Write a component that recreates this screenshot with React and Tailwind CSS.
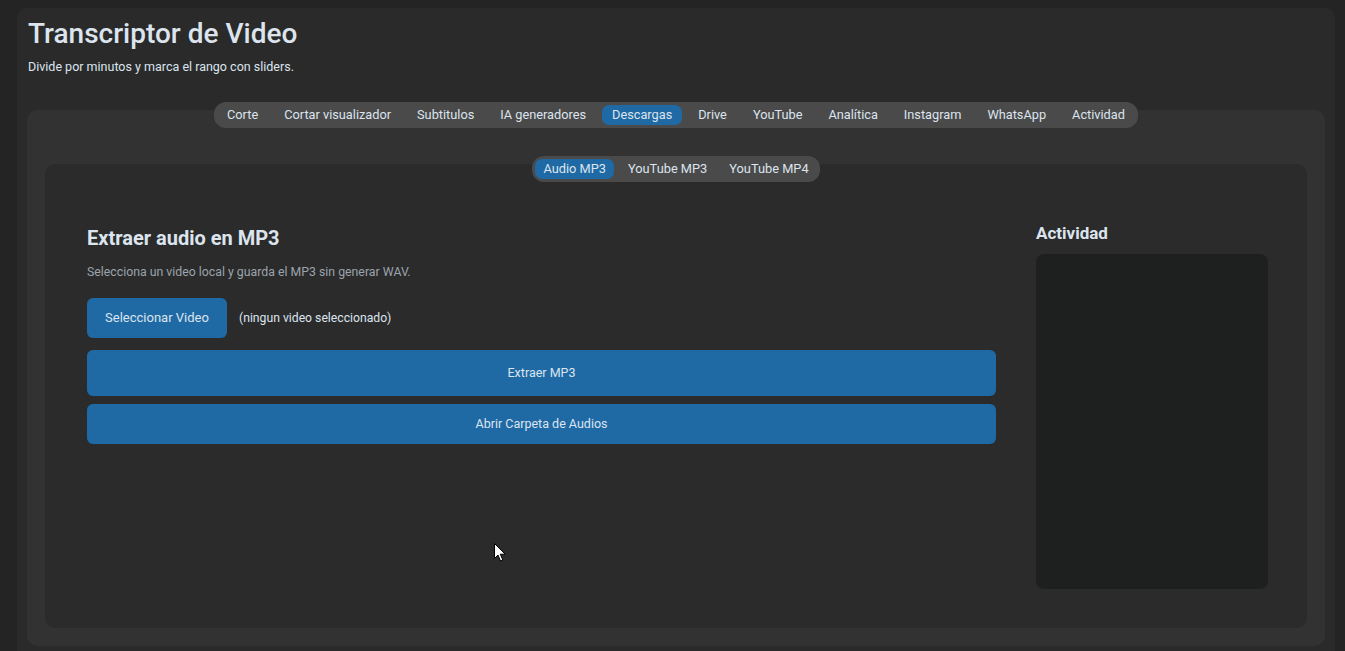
import React, { useState } from 'react';

const mainTabs = [
    'Corte',
    'Cortar visualizador',
    'Subtitulos',
    'IA generadores',
    'Descargas',
    'Drive',
    'YouTube',
    'Analítica',
    'Instagram',
    'WhatsApp',
    'Actividad',
];

const downloadTabs = ['Audio MP3', 'YouTube MP3', 'YouTube MP4'];

// Segmented tab strip, sits half over the panel below it
const TabStrip = ({ tabs, active, onSelect, pad = 'px-[10px]', size = 'text-[13px]' }) => (
    <div className="relative z-10 flex items-center gap-[6px] rounded-[12px] bg-[#4a4a4a] p-[3px]">
        {tabs.map((tab) => (
            <button
                key={tab}
                type="button"
                onClick={() => onSelect(tab)}
                className={`h-[20px] rounded-[7px] ${pad} ${size} leading-[20px] text-[#dce4ee] ${
                    active === tab ? 'bg-[#1f6aa5]' : 'bg-transparent'
                }`}
            >
                {tab}
            </button>
        ))}
    </div>
);

const Cursor = () => (
    <svg
        className="pointer-events-none absolute left-[494px] top-[543px]"
        width="13"
        height="20"
        viewBox="0 0 13 20"
    >
        <path
            d="M0.5 0.5 L0.5 15.5 L4 12 L6.5 18 L8.8 17 L6.3 11.2 L11.2 11.2 Z"
            fill="#ffffff"
            stroke="#000000"
            strokeWidth="1"
            strokeLinejoin="round"
        />
    </svg>
);

const App = () => {
    const [tab, setTab] = useState('Descargas');
    const [subTab, setSubTab] = useState('Audio MP3');

    return (
        <div
            className="relative h-[651px] overflow-hidden bg-[#242424] pl-[17px] pr-[10px] pt-[8px]"
            style={{ fontFamily: 'Roboto, "Liberation Sans", sans-serif' }}
        >
            <div className="rounded-t-[10px] bg-[#2a2a2a] px-[10px] pb-[10px] pt-[9px]">
                <div className="pl-[1px]">
                    <h1 className="text-[28px] font-medium leading-[34px] text-[#dce4ee]">
                        Transcriptor de Video
                    </h1>
                    <p className="mt-[8px] text-[12.5px] leading-[16px] text-[#dce4ee]">
                        Divide por minutos y marca el rango con sliders.
                    </p>
                </div>

                <div className="mt-[27px] flex flex-col items-center">
                    <TabStrip
                        tabs={mainTabs}
                        active={tab}
                        onSelect={setTab}
                        size="text-[12.75px]"
                    />

                    <div className="-mt-[18px] w-full rounded-[10px] bg-[#323232] px-[18px] pb-[18px] pt-[46px]">
                        <div className="flex flex-col items-center">
                            <TabStrip
                                tabs={downloadTabs}
                                active={subTab}
                                onSelect={setSubTab}
                                pad="px-[8px]"
                                size="text-[12.8px]"
                            />

                            <div className="-mt-[18px] flex w-full gap-[40px] rounded-[10px] bg-[#2b2b2b] pb-[39px] pl-[42px] pr-[39px] pt-[62px]">
                                <div className="flex flex-1 flex-col">
                                    <h2 className="text-[20px] font-bold leading-[24px] text-[#dce4ee]">
                                        Extraer audio en MP3
                                    </h2>
                                    <p className="mt-[14px] text-[12.3px] leading-[16px] text-[#9ba3ab]">
                                        Selecciona un video local y guarda el MP3 sin generar WAV.
                                    </p>

                                    <div className="mt-[18px] flex items-center gap-[12px]">
                                        <button
                                            type="button"
                                            className="h-[40px] w-[140px] rounded-[6px] bg-[#1f6aa5] text-[13px] text-[#dce4ee]"
                                        >
                                            Seleccionar Video
                                        </button>
                                        <span className="text-[12.2px] text-[#dce4ee]">
                                            (ningun video seleccionado)
                                        </span>
                                    </div>

                                    <button
                                        type="button"
                                        className="mt-[12px] h-[46px] w-full rounded-[6px] bg-[#1f6aa5] text-[12.5px] text-[#dce4ee]"
                                    >
                                        Extraer MP3
                                    </button>
                                    <button
                                        type="button"
                                        className="mt-[8px] h-[40px] w-full rounded-[6px] bg-[#1f6aa5] text-[12.5px] text-[#dce4ee]"
                                    >
                                        Abrir Carpeta de Audios
                                    </button>
                                </div>

                                <div className="flex w-[232px] flex-col">
                                    <h3 className="mt-[-3px] text-[17px] font-bold leading-[20px] text-[#dce4ee]">
                                        Actividad
                                    </h3>
                                    <div className="mt-[11px] h-[335px] rounded-[8px] bg-[#1e1f1f]" />
                                </div>
                            </div>
                        </div>
                    </div>
                </div>
            </div>

            <Cursor />
        </div>
    );
};

export default App;
